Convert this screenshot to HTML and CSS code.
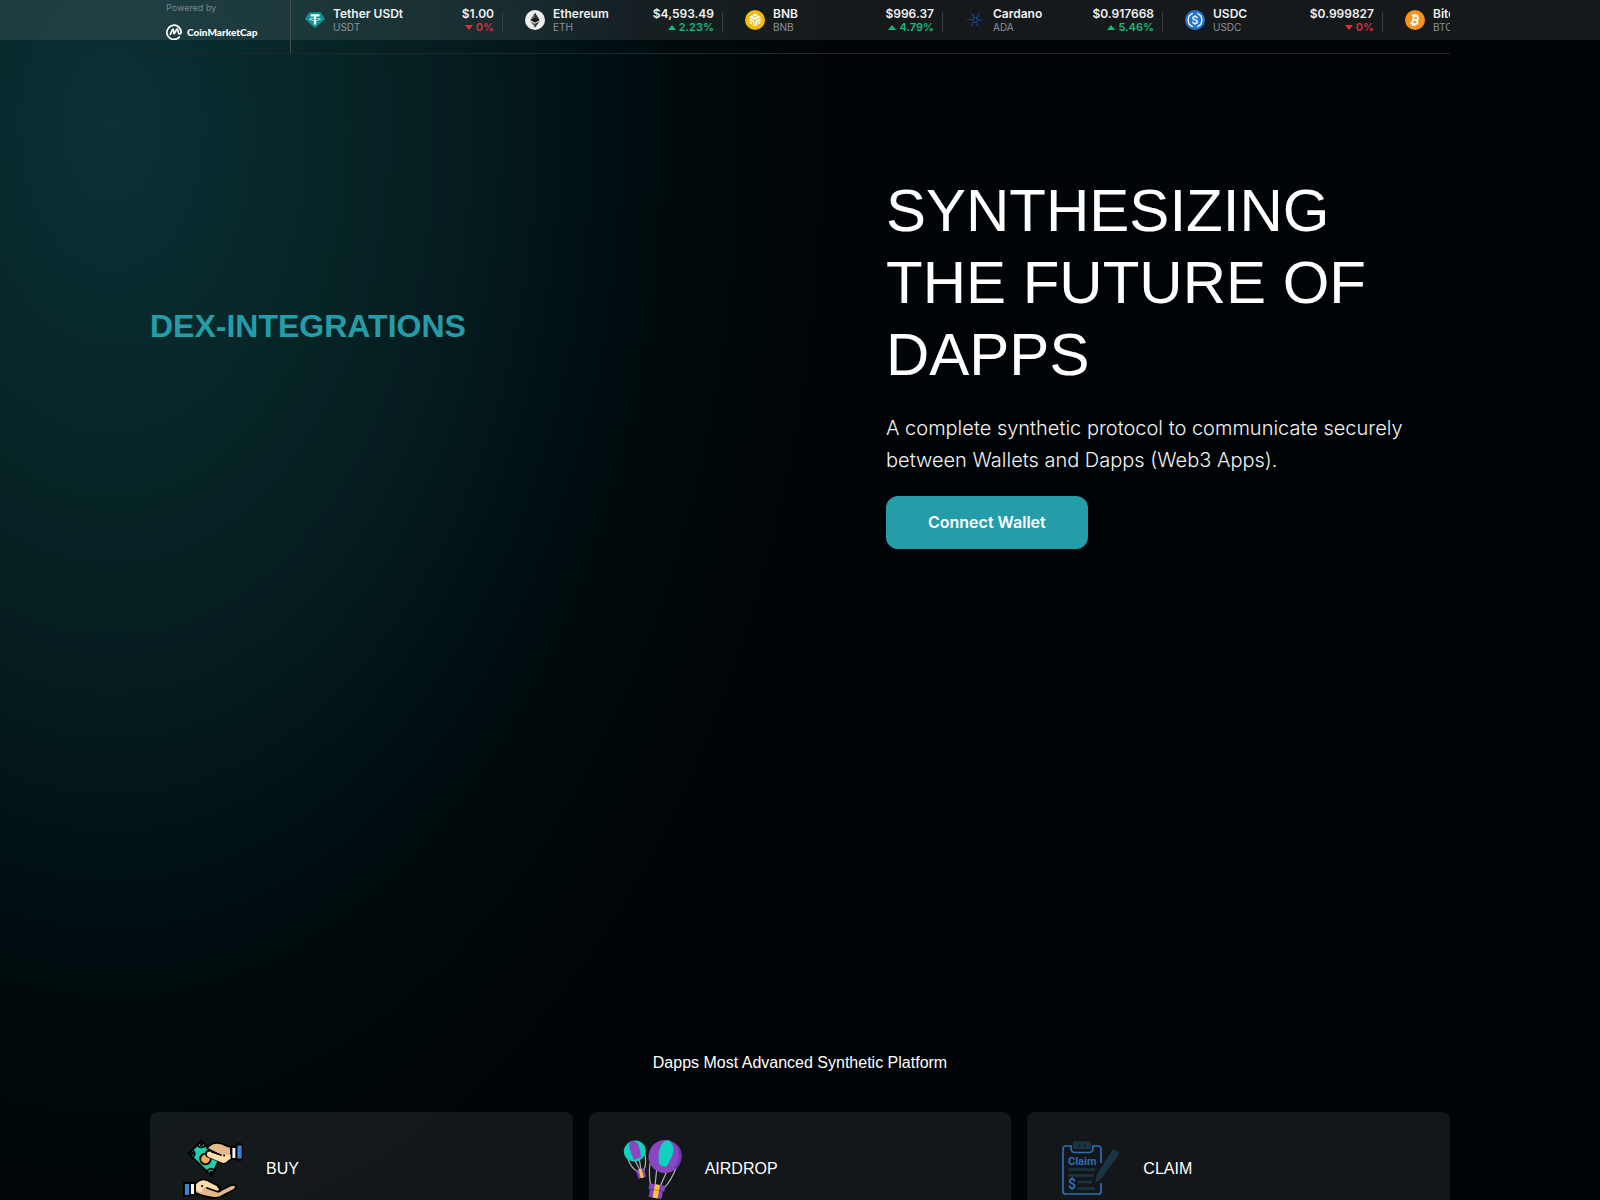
FILE: index.html
```html
<!DOCTYPE html>
<html lang="en">
<head>
<meta charset="utf-8">
<meta name="viewport" content="width=device-width, initial-scale=1">
<title>Dapps Synthetic Platform</title>
<link rel="stylesheet" href="styles.css">
</head>
<body>
<header class="topbar">
  <div class="container ticker">
    <a class="powered" href="#">
      <span class="powered-label">Powered by</span>
      <span class="brand">
        <svg class="brand-mark" viewBox="0 0 16 16" fill="none" stroke="#fff" stroke-width="1.7" stroke-linecap="round" stroke-linejoin="round"><path d="M13.2 13.2A7.1 7.1 0 1 1 15.1 8c0 2-1.9 2.6-2.6 1.1-.5-1.200-.4-4.200-1.400-4.200-.8 0-2.200 4.900-2.900 4.900S7.900 5 7 5c-.9 0-1.300 3.600-2.700 5.300"/></svg>
        <span class="brand-name">CoinMarketCap</span>
      </span>
    </a>
    <ul class="coins">
      <li class="coin">
        <svg class="coin-icon" viewBox="0 0 20 20"><path d="M4.300 2.200h11.400L20 9l-10 9.200L0 9z" fill="#0f9390"/><path d="M5.500 4.300h9v2.200h-3.300v1.400c2.500.1 4.500.6 4.500 1.300s-2 1.200-4.500 1.300v4H8.800v-4c-2.500-.1-4.500-.6-4.500-1.300s2-1.200 4.500-1.300V6.500H5.500z" fill="#fff"/><path d="M8.800 8.500v1.100h2.400V8.500c1.800.1 3.200.3 3.200.7 0 .5-2 .8-4.400.8s-4.400-.3-4.400-.8c0-.4 1.400-.6 3.200-.7z" fill="#0f9390"/></svg>
        <div class="coin-id"><strong>Tether USDt</strong><span>USDT</span></div>
        <div class="coin-price"><strong>$1.00</strong><span class="down">0%</span></div>
        <i class="divider"></i>
      </li>
      <li class="coin">
        <svg class="coin-icon" viewBox="0 0 20 20"><circle cx="10" cy="10" r="10" fill="#ededed"/><path d="M10 2.500v9.900l-4.600-2.500z" fill="#5a5a5a"/><path d="M10 2.500v9.900l4.600-2.500z" fill="#2c2c2c"/><path d="M10 8l4.600 1.900L10 12.600 5.400 9.900z" fill="#151515"/><path d="M5.400 11.200L10 13.800v3.900z" fill="#666"/><path d="M14.600 11.200L10 13.800v3.900z" fill="#2c2c2c"/></svg>
        <div class="coin-id"><strong>Ethereum</strong><span>ETH</span></div>
        <div class="coin-price"><strong>$4,593.49</strong><span class="up">2.23%</span></div>
        <i class="divider"></i>
      </li>
      <li class="coin">
        <svg class="coin-icon" viewBox="0 0 20 20"><circle cx="10" cy="10" r="10" fill="#f0b90b"/><path d="M10 3.500l5.500 3.200v6.400L10 16.400l-5.500-3.300V6.700z" fill="#fff"/><path d="M4.500 7.500L10 10.700l5.500-3.200M10 10.700v5.700M7.200 5.500L10 7.200l2.800-1.700M4.500 10.500l3 1.800v3M15.500 10.500l-3 1.800v3" fill="none" stroke="#f0b90b" stroke-width="1"/></svg>
        <div class="coin-id"><strong>BNB</strong><span>BNB</span></div>
        <div class="coin-price"><strong>$996.37</strong><span class="up">4.79%</span></div>
        <i class="divider"></i>
      </li>
      <li class="coin">
        <svg class="coin-icon" viewBox="0 0 20 20" fill="none" stroke="#1450b4" stroke-linecap="round"><circle cx="10" cy="10" r="2.700" stroke-width="1.900" stroke-dasharray=".1 2.720"/><circle cx="10" cy="10" r="5.200" stroke-width="1.600" stroke-dasharray=".1 5.340"/><circle cx="10" cy="10" r="7.200" stroke-width="1" stroke-dasharray=".1 7.440" opacity=".8"/><circle cx="10" cy="10" r="9" stroke-width=".9" stroke-dasharray=".1 9.320" opacity=".7"/></svg>
        <div class="coin-id"><strong>Cardano</strong><span>ADA</span></div>
        <div class="coin-price"><strong>$0.917668</strong><span class="up">5.46%</span></div>
        <i class="divider"></i>
      </li>
      <li class="coin">
        <svg class="coin-icon" viewBox="0 0 20 20"><circle cx="10" cy="10" r="10" fill="#2775ca"/><path d="M7.800 3.400a7 7 0 0 0 0 13.200M12.200 3.400a7 7 0 0 1 0 13.200M12.300 8.300c0-1.100-.9-1.700-2.300-1.700s-2.200.6-2.200 1.600c0 2.400 4.600 1.100 4.600 3.500 0 1.100-1 1.700-2.400 1.700s-2.400-.7-2.400-1.800M10 5.200v1.400M10 13.400v1.400" fill="none" stroke="#fff" stroke-width="1.300"/></svg>
        <div class="coin-id"><strong>USDC</strong><span>USDC</span></div>
        <div class="coin-price"><strong>$0.999827</strong><span class="down">0%</span></div>
        <i class="divider"></i>
      </li>
      <li class="coin">
        <svg class="coin-icon" viewBox="0 0 20 20"><circle cx="10" cy="10" r="10" fill="#f7931a"/><g transform="rotate(13 10 10)" fill="none" stroke="#fff"><path d="M6 5.900h4.300c3 0 3 3.900 0 3.900H8M10.300 9.800c3.600 0 3.600 4.300 0 4.300H6M8 5.900v8.200" stroke-width="1.800"/><path d="M8.700 3.700v2M11 3.700v2M8.700 14.300v2M11 14.300v2" stroke-width="1.200"/></g></svg>
        <div class="coin-id"><strong>Bitcoin</strong><span>BTC</span></div>
      </li>
    </ul>
  </div>
</header>
<main class="container">
  <section class="hero">
    <h2 class="hero-tag">DEX-INTEGRATIONS</h2>
    <div class="hero-copy">
      <h1>SYNTHESIZING THE FUTURE OF DAPPS</h1>
      <p>A complete synthetic protocol to communicate securely between Wallets and Dapps (Web3 Apps).</p>
      <button class="connect" type="button">Connect Wallet</button>
    </div>
  </section>
  <section class="platform">
    <p class="platform-title">Dapps Most Advanced Synthetic Platform</p>
    <div class="cards">
      <a class="card" href="#">
        <svg class="card-icon" viewBox="0 0 60 60" stroke="#000" stroke-width="1.800" stroke-linejoin="round" stroke-linecap="round">
          <path d="M18.500 1L36 20 28.500 36 5.500 13.500z" fill="#23cdab"/>
          <path d="M14.500 5.200c2 3 6 3 8 0M9.500 10c3 3 3 5 0 7.500M24 31.500c1-3 5-4 8-.5" fill="none"/>
          <circle cx="18.500" cy="4.500" r=".8"/><circle cx="9" cy="13.500" r=".8"/><circle cx="28" cy="32.500" r=".8"/>
          <circle cx="22.500" cy="19" r="5.300" fill="#f2b04b"/>
          <path d="M24 8c4-5 9-6 14-4.500 4 1 7 3.500 10 3.500v12c-3 0-4 4-8 4L26 17c-4-1-4-6 0-6l9 3-10-5z" fill="#e3b98c"/>
          <path d="M27 11.500l10 3.200h11V19c-3 0-4 4-8 4l-13.500-5.500c-4-1.500-3-6 .5-6z" fill="#ffdcab" stroke="none"/>
          <path d="M29 12l9 3M41 15.500h.2" fill="none"/>
          <path d="M48.500 7h5v12h-5z" fill="#f4f4f4"/><path d="M53.500 4.500h6v15h-6z" fill="#3a86d3"/>
          <path d="M1 43h6v13H1z" fill="#3a86d3"/><path d="M7 43h5v12H7z" fill="#f4f4f4"/>
          <path d="M12.500 44c4-5 10-6 15-2l8 4c4 2 3 5 0 5.500l12-6c5-2 7 1 4 4L37 57c-5 2-12 0-16-1l-8.500-3z" fill="#e3b98c"/>
          <path d="M13 44.500c4-5 9-5 14-1.500l8 4c3 2 2 4-1 4l-13-4-2 5-6-1z" fill="#ffdcab" stroke="none"/>
          <path d="M24 48l10 3.500c3 .5 4-3 1-4.700M19 46h.2" fill="none"/>
        </svg>
        <span>BUY</span>
      </a>
      <a class="card" href="#">
        <svg class="card-icon" viewBox="0 0 60 60" fill="none">
          <path d="M6 19c2 6 5 10 9 12M12 19l6 11M17 17l2 13M23 14c1 6 1 11-1 16M28 23c-1 9-1 16 1 23M35 26l-2 20M47 26l-9 21M54 28c-3 8-7 15-12 20" stroke="#aeb3b5" stroke-width="1.200"/>
          <ellipse cx="12.800" cy="11" rx="11" ry="10.500" transform="rotate(-15 13 11)" fill="#10d0bf"/>
          <path d="M9 .900c8-1 9 8 10 16l-7 3C9 12 5 6 9 .900z" fill="#8846c2"/>
          <circle cx="43" cy="16.500" r="16.500" fill="#8846c2"/>
          <path d="M48 1c14 4 15 19 6 28-5-2-8-2-10-2C50 16 51 8 48 1z" fill="#6c37a5"/>
          <path d="M50 2c9 6 9 18 2 26-5-2-7-1-9-2z" fill="#8846c2"/>
          <path d="M46 0c9 5 6 16-2 27-3-1-5-1-7-3C36 13 37 2 46 0z" fill="#10d0bf"/>
          <g transform="rotate(-15 19 33)"><path d="M14.500 29h9v3h-9zM15 32h8v6h-8z" fill="#8846c2"/><path d="M17.500 29h3v9h-3z" fill="#ffc533"/></g>
          <g transform="rotate(10 34 50)"><path d="M26.500 44.500h16v6h-16zM28 50.500h13V58H28z" fill="#8846c2"/><path d="M28 50h13" stroke="#5d2e91" stroke-width="1"/><path d="M32 44.500h5V58h-5z" fill="#ffc533"/><path d="M32 50h5" stroke="#d57d21" stroke-width="1"/></g>
        </svg>
        <span>AIRDROP</span>
      </a>
      <a class="card" href="#">
        <svg class="card-icon" viewBox="0 0 60 60" fill="none">
          <path d="M12 6H5.500A2.500 2.500 0 0 0 3 8.500v43A2.500 2.500 0 0 0 5.500 54h33a2.500 2.500 0 0 0 2.500-2.500V43M41 23V8.500A2.500 2.500 0 0 0 38.500 6H33v2.500a4 4 0 0 1-4 4H15a4 4 0 0 1-4-4V6" stroke="#2d6db4" stroke-width="1.700"/>
          <path d="M14 1.500h16a1 1 0 0 1 1 1V9H13V2.500a1 1 0 0 1 1-1z" fill="#1b3444"/>
          <path d="M18 5.500h2M24 5.500h2" stroke="#101c22" stroke-width="2"/>
          <text x="8" y="25" class="claim-word">Claim</text>
          <text x="8" y="49" class="claim-sign">$</text>
          <path d="M8.500 29.500h26.500M8.500 35.500h25M17.500 42H32M17.500 48.500H35" stroke="#1b3444" stroke-width="2.400"/>
          <path d="M54 9.200l4.500 3.300c.8.600.6 1.300.2 2L42 37.500l-6.500 5.500 1-8L52.500 9.800c.4-.7.900-1 1.500-.6z" fill="#1b3444"/>
        </svg>
        <span>CLAIM</span>
      </a>
    </div>
  </section>
</main>
</body>
</html>
```
FILE: styles.css
```css
* { box-sizing: border-box; margin: 0; padding: 0; }

body {
  min-height: 100vh;
  color: #fff;
  font: 16px/24px "Liberation Sans", Arial, sans-serif;
  background: #000406 radial-gradient(ellipse 730px 1150px at 7% 125px,
    #0c3036 0%, #092b2f 14%, #072526 30%, #051c1f 48%, #021317 62%,
    #010d12 70%, #000a0b 78%, #000406 100%) no-repeat;
}

a { color: inherit; text-decoration: none; }

.container {
  width: calc(100% - 64px);
  max-width: 1300px;
  margin: 0 auto;
}

/* Price ticker */
.topbar { height: 40px; background: rgba(255, 255, 255, .085); }

.ticker {
  display: flex;
  overflow: hidden;
  font-family: Inter, sans-serif;
  border-bottom: 1px solid #1f262c;
}

.powered {
  flex: none;
  width: 141px;
  height: 53px;
  padding: 2px 16px 0;
  border-right: 1px solid #4a4f50;
}

.powered-label { display: block; color: #7d868c; font-size: 9px; line-height: 12px; }

.brand { display: flex; align-items: center; gap: 5px; margin-top: 10px; }

.brand-mark { width: 16px; height: 16px; }

.brand-name { font: 900 10px/16px Lato, sans-serif; }

.coins { display: flex; list-style: none; }

.coin {
  display: flex;
  flex: none;
  align-items: center;
  width: 220px;
  height: 40px;
  padding: 0 8px 0 14px;
}

.coin-icon { flex: none; width: 20px; height: 20px; margin-right: 8px; }

.coin-id { flex: 1; }

.coin-id, .coin-price { display: flex; flex-direction: column; }

.coin strong { font-size: 12px; font-weight: 600; line-height: 14px; color: #f0f1f1; }

.coin-id span { color: #8b929b; font-size: 10px; line-height: 13px; }

.coin-price { align-items: flex-end; }

.coin-price span {
  display: flex;
  align-items: center;
  gap: 3px;
  font-size: 11px;
  font-weight: 600;
  line-height: 13px;
}

.coin-price span::before {
  content: "";
  border: 4px solid transparent;
}

.up { color: #16b979; }
.coin-price .up::before { border-top: 0; border-bottom: 5px solid; }

.down { color: #d3343b; }
.coin-price .down::before { border-bottom: 0; border-top: 5px solid; }

.divider {
  align-self: flex-end;
  width: 1px;
  height: 20px;
  margin: 0 0 8px 8px;
  background: #3a4042;
}

/* Hero */
.hero {
  display: grid;
  grid-template-columns: 736fr 564fr;
  align-content: start;
  align-items: center;
  min-height: 1011px;
  padding-top: 135px;
}

.hero-tag {
  padding-bottom: 72px;
  color: #259da9;
  font-size: 32px;
  line-height: 40px;
}

.hero-copy h1 { max-width: 520px; font-size: 60px; font-weight: 400; line-height: 72px; }

.hero-copy p {
  margin: 21px 0 20px;
  color: #f2f2f2;
  font: 300 20px/32px Inter, sans-serif;
}

.connect {
  display: block;
  padding: 16px 42px;
  border: 0;
  border-radius: 12px;
  background: #259da9;
  color: #fff;
  font: 600 16px/21px Inter, sans-serif;
}

/* Platform cards */
.platform-title { margin-bottom: 37px; text-align: center; }

.cards { display: grid; grid-template-columns: repeat(3, 1fr); gap: 16px; }

.card {
  display: flex;
  align-items: center;
  gap: 23px;
  padding: 28px 33px;
  border-radius: 8px;
  background: rgba(255, 255, 255, .08);
}

.card span { padding-bottom: 2px; }

.card-icon { flex: none; width: 60px; height: 60px; }

.claim-word { fill: #2d6db4; font: 700 11px Roboto, sans-serif; }
.claim-sign { fill: #2d6db4; font: 700 14px Roboto, sans-serif; }
```
